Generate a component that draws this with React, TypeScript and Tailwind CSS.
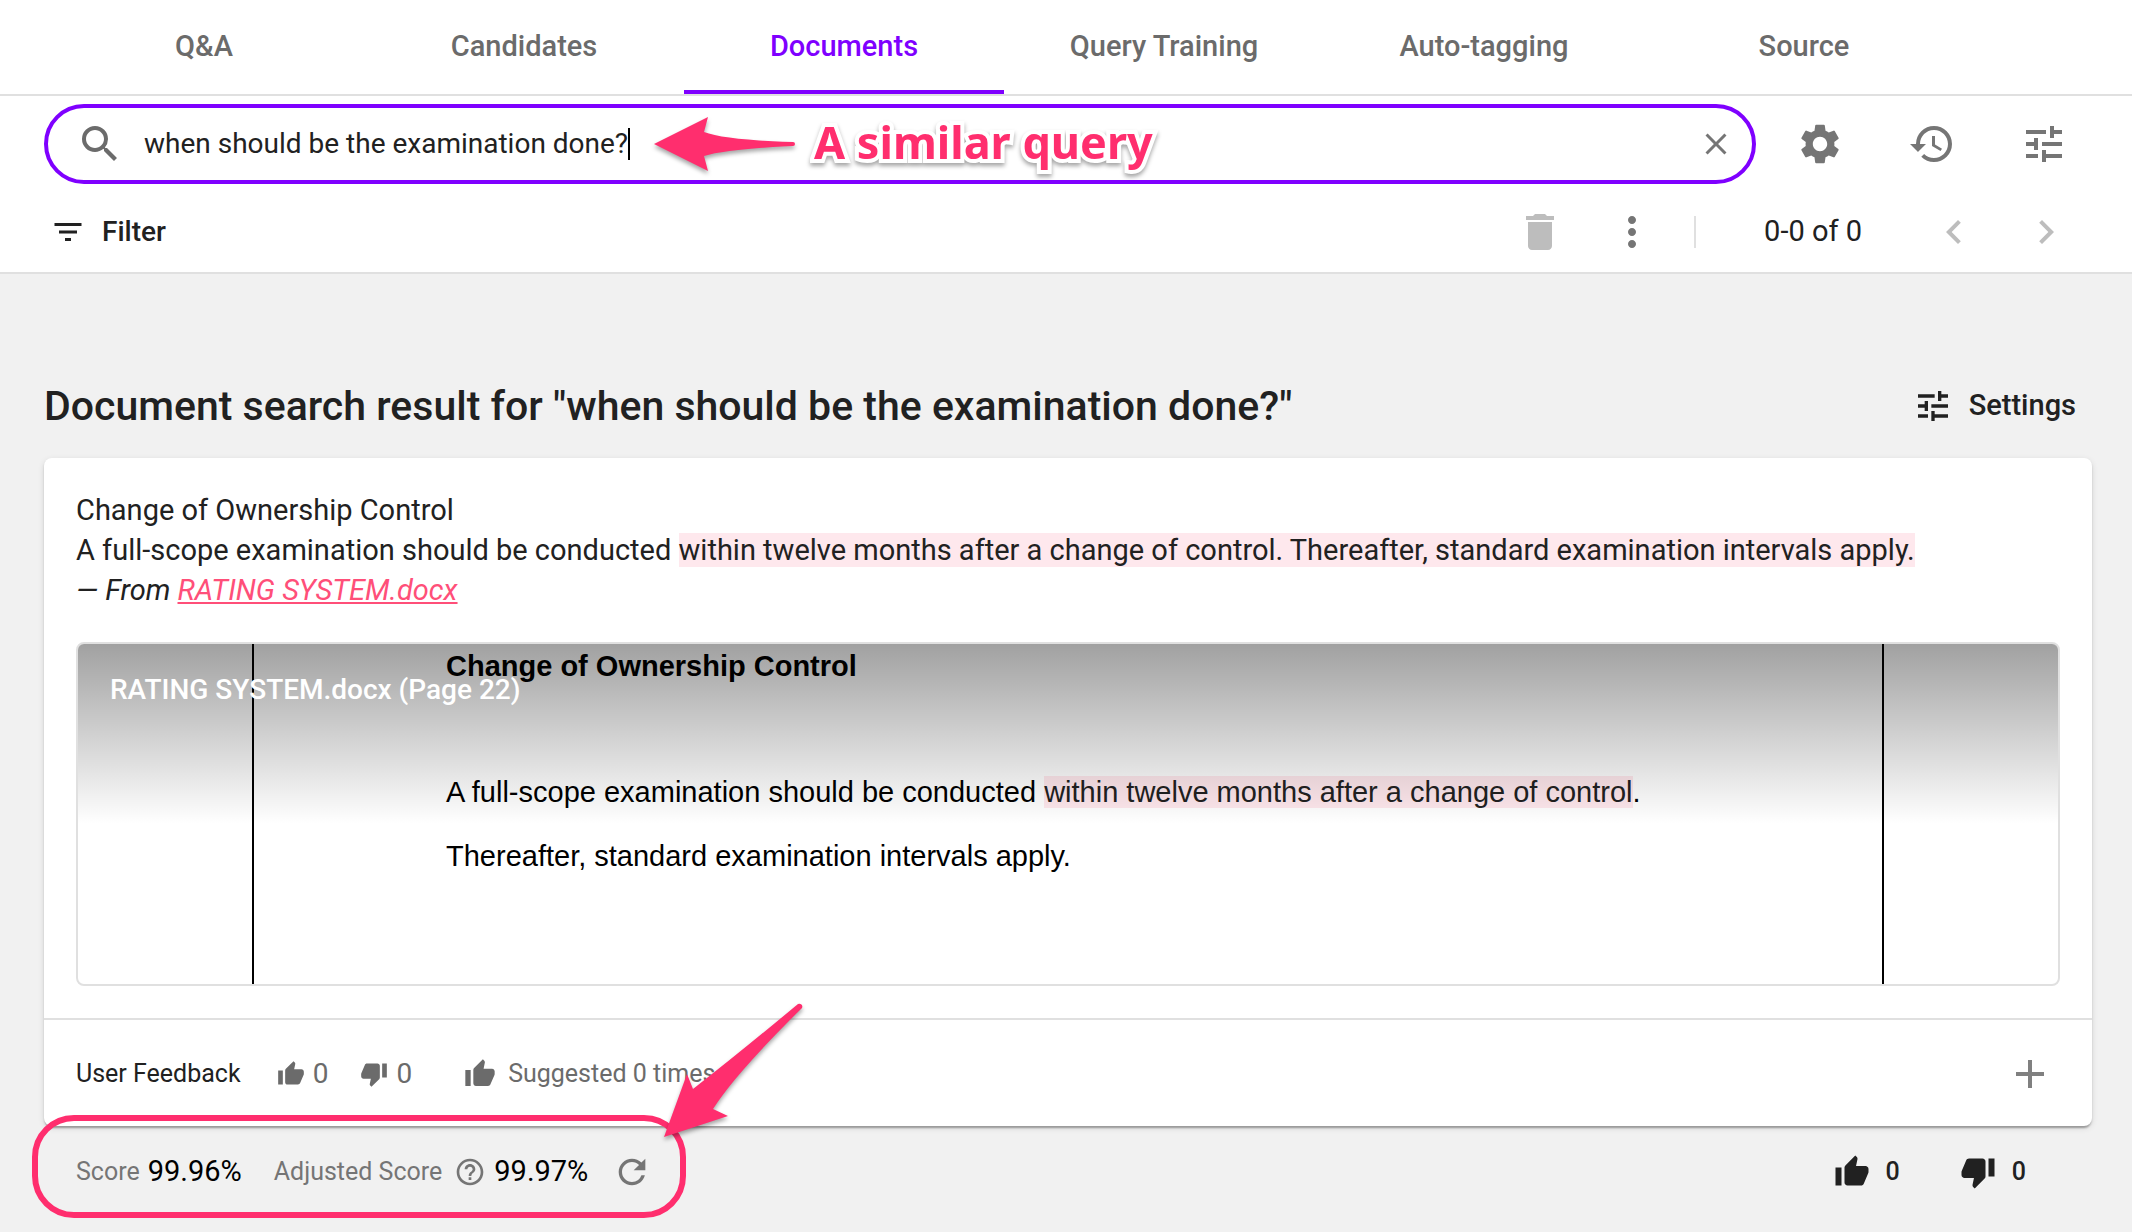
import { useState } from "react";
import {
  MdAdd,
  MdChevronLeft,
  MdChevronRight,
  MdClose,
  MdDelete,
  MdFilterList,
  MdHelpOutline,
  MdHistory,
  MdMoreVert,
  MdRefresh,
  MdSearch,
  MdSettings,
  MdThumbDown,
  MdThumbUp,
  MdTune,
} from "react-icons/md";

const TABS = [
  "Q&A",
  "Candidates",
  "Documents",
  "Query Training",
  "Auto-tagging",
  "Source",
];

const QUERY = "when should be the examination done?";

function Tabs() {
  const [active, setActive] = useState("Documents");

  return (
    <nav className="flex border-b-2 border-[#e0e0e0] pr-42 pl-11">
      {TABS.map((tab) => (
        <button
          key={tab}
          type="button"
          onClick={() => setActive(tab)}
          className={`h-[94px] flex-1 border-b-4 pt-1 text-[29px] font-medium ${
            tab === active
              ? "border-[#7f00ff] text-[#7f00ff]"
              : "border-transparent text-[#6b6b6b]"
          }`}
        >
          {tab}
        </button>
      ))}
    </nav>
  );
}

function SearchBar() {
  const [query, setQuery] = useState(QUERY);

  return (
    <div className="flex items-center gap-10 pt-2 pr-16 pl-11">
      <div className="relative flex h-20 flex-1 items-center rounded-full border-4 border-[#7f00ff] pr-4.5 pl-7">
        <MdSearch className="size-12 shrink-0 text-[#6b6b6b]" />
        <input
          aria-label="Search documents"
          value={query}
          onChange={(e) => setQuery(e.target.value)}
          className="ml-5 field-sizing-content text-[28px] text-[#212121] outline-none"
        />
        <span className="h-8 w-0.5 bg-black" />
        <button
          type="button"
          aria-label="Clear search"
          onClick={() => setQuery("")}
          className="ml-auto text-[#757575]"
        >
          <MdClose className="size-9" />
        </button>

        {/* annotation over the field */}
        <div className="pointer-events-none absolute top-1.5 left-[602px] flex items-center gap-4">
          <svg
            viewBox="0 0 148 60"
            className="h-[60px] w-[148px] drop-shadow-[0_3px_2px_rgba(0,0,0,0.35)]"
          >
            <path
              d="M4 29 L58 2 L54 17 Q75 25 143 27 A2 2 0 0 1 143 31 Q75 34 54 41 L58 56 Z"
              fill="#ff2e6e"
            />
          </svg>
          <span className="pb-1.5 font-['Noto_Sans',sans-serif] text-[45px] leading-[56px] font-bold whitespace-nowrap text-[#ff2e6e] drop-shadow-[0_3px_2px_rgba(0,0,0,0.35)] [-webkit-text-stroke:8px_white] [paint-order:stroke_fill]">
            A similar query
          </span>
        </div>
      </div>
      <div className="flex gap-16 text-[#757575]">
        <button type="button" aria-label="Settings">
          <MdSettings className="size-12" />
        </button>
        <button type="button" aria-label="History">
          <MdHistory className="size-12" />
        </button>
        <button type="button" aria-label="Tune">
          <MdTune className="size-12" />
        </button>
      </div>
    </div>
  );
}

function Toolbar() {
  return (
    <div className="flex h-[90px] items-center justify-between border-b-2 border-[#e0e0e0] pt-2 pr-[62px] pl-[50px]">
      <button
        type="button"
        className="flex items-center gap-4 text-[28px] font-medium text-[#212121]"
      >
        <MdFilterList className="size-9" />
        Filter
      </button>
      <div className="flex items-center gap-11 text-[#757575]">
        <button type="button" aria-label="Delete" className="text-[#bdbdbd]">
          <MdDelete className="size-12" />
        </button>
        <button type="button" aria-label="More">
          <MdMoreVert className="size-12" />
        </button>
        <span className="mr-6 -ml-1.5 h-8 w-0.5 bg-[#e0e0e0]" />
        <span className="mr-6 text-[29px] text-[#212121]">0-0 of 0</span>
        <button type="button" aria-label="Previous page" className="text-[#bdbdbd]">
          <MdChevronLeft className="size-12" />
        </button>
        <button type="button" aria-label="Next page" className="text-[#bdbdbd]">
          <MdChevronRight className="size-12" />
        </button>
      </div>
    </div>
  );
}

function PagePreview() {
  return (
    <div className="relative mt-8 h-[344px] overflow-hidden rounded-lg border-2 border-[#e0e0e0]">
      <div className="mx-[174px] h-full border-x-2 border-black pl-48 font-['Liberation_Sans',sans-serif] text-[29px] leading-8 text-black">
        <h2 className="pt-1.5 font-bold">Change of Ownership Control</h2>
        <p className="mt-[94px]">
          A full-scope examination should be conducted{" "}
          <mark className="bg-[#ffe8ed] text-[#212121]">
            within twelve months after a change of control
          </mark>
          .
        </p>
        <p className="mt-8">Thereafter, standard examination intervals apply.</p>
      </div>
      <div className="absolute inset-x-0 top-0 h-[180px] bg-linear-to-b from-black/37 to-transparent px-8 pt-[26px] text-[28px] leading-10 font-medium text-white">
        RATING SYSTEM.docx (Page 22)
      </div>
    </div>
  );
}

function FeedbackRow() {
  return (
    <div className="flex h-[108px] items-center border-t-2 border-[#e0e0e0] pt-0.5 pr-[38px] pl-8 text-[#6b6b6b]">
      <span className="text-[25px] text-[#212121]">User Feedback</span>
      <span className="ml-9 flex items-center gap-2 text-[28px]">
        <MdThumbUp className="size-7" />0
      </span>
      <span className="ml-8 flex items-center gap-2 text-[28px]">
        <MdThumbDown className="size-7" />0
      </span>
      <span className="ml-13 flex items-center gap-3 text-[25px]">
        <MdThumbUp className="size-8" />
        Suggested 0 times
      </span>
      <button type="button" aria-label="Add" className="ml-auto text-[#808080]">
        <MdAdd className="size-12" />
      </button>
    </div>
  );
}

function ScoreRow() {
  return (
    <div className="relative flex h-[92px] items-center justify-between pr-[66px] pl-8">
      <div className="flex items-center text-[25px] text-[#757575]">
        <span>Score</span>
        <span className="ml-2 text-[29px] text-black">99.96%</span>
        <span className="ml-8">Adjusted Score</span>
        <MdHelpOutline className="ml-3 size-8" />
        <span className="ml-2 text-[29px] text-black">99.97%</span>
        <button type="button" aria-label="Refresh score" className="ml-6">
          <MdRefresh className="size-10" />
        </button>
      </div>
      <div className="flex gap-15 text-[25px] font-medium text-[#212121]">
        <button type="button" className="flex items-center gap-4">
          <MdThumbUp className="size-9" />0
        </button>
        <button type="button" className="flex items-center gap-4">
          <MdThumbDown className="size-9" />0
        </button>
      </div>

      {/* hand drawn callout around the scores */}
      <div className="pointer-events-none absolute -top-[11px] -left-3 h-[103px] w-[654px] rounded-[42px] border-6 border-[#ff2e6e]" />
      <svg
        viewBox="0 0 148 144"
        className="pointer-events-none absolute -top-[126px] left-[616px] h-36 w-[148px] drop-shadow-[0_3px_2px_rgba(0,0,0,0.35)]"
      >
        <path
          d="M4 137 L27 74 L33 89 Q78 54 138 4 A3 3 0 0 1 142 8 Q75 74 53 109 L68 116 Z"
          fill="#ff2e6e"
        />
      </svg>
    </div>
  );
}

export default function App() {
  return (
    <div className="min-h-screen bg-[#f1f1f1] font-[Roboto,sans-serif] text-[#212121]">
      <header className="bg-white">
        <Tabs />
        <SearchBar />
        <Toolbar />
      </header>
      <main className="pt-26 pr-10 pl-11">
        <div className="flex items-center justify-between pr-4 pb-6">
          <h1 className="text-[41px] leading-14 font-medium">
            Document search result for "{QUERY}"
          </h1>
          <button
            type="button"
            className="flex items-center gap-4 text-[29px] font-medium"
          >
            <MdTune className="size-10" />
            Settings
          </button>
        </div>
        <section className="rounded-lg bg-white shadow-[0_4px_2px_-2px_rgba(0,0,0,0.2),0_2px_2px_0_rgba(0,0,0,0.14),0_2px_6px_0_rgba(0,0,0,0.12)]">
          <div className="px-8 pt-8 pb-8">
            <div className="text-[29px] leading-10">
              <p>Change of Ownership Control</p>
              <p>
                A full-scope examination should be conducted{" "}
                <mark className="bg-[#fee8ed] text-[#212121]">
                  within twelve months after a change of control. Thereafter,
                  standard examination intervals apply.
                </mark>
              </p>
              <p className="italic">
                — From{" "}
                <a href="#rating-system" className="text-[#ff4f79] underline">
                  RATING SYSTEM.docx
                </a>
              </p>
            </div>
            <PagePreview />
          </div>
          <FeedbackRow />
        </section>
        <ScoreRow />
      </main>
    </div>
  );
}
